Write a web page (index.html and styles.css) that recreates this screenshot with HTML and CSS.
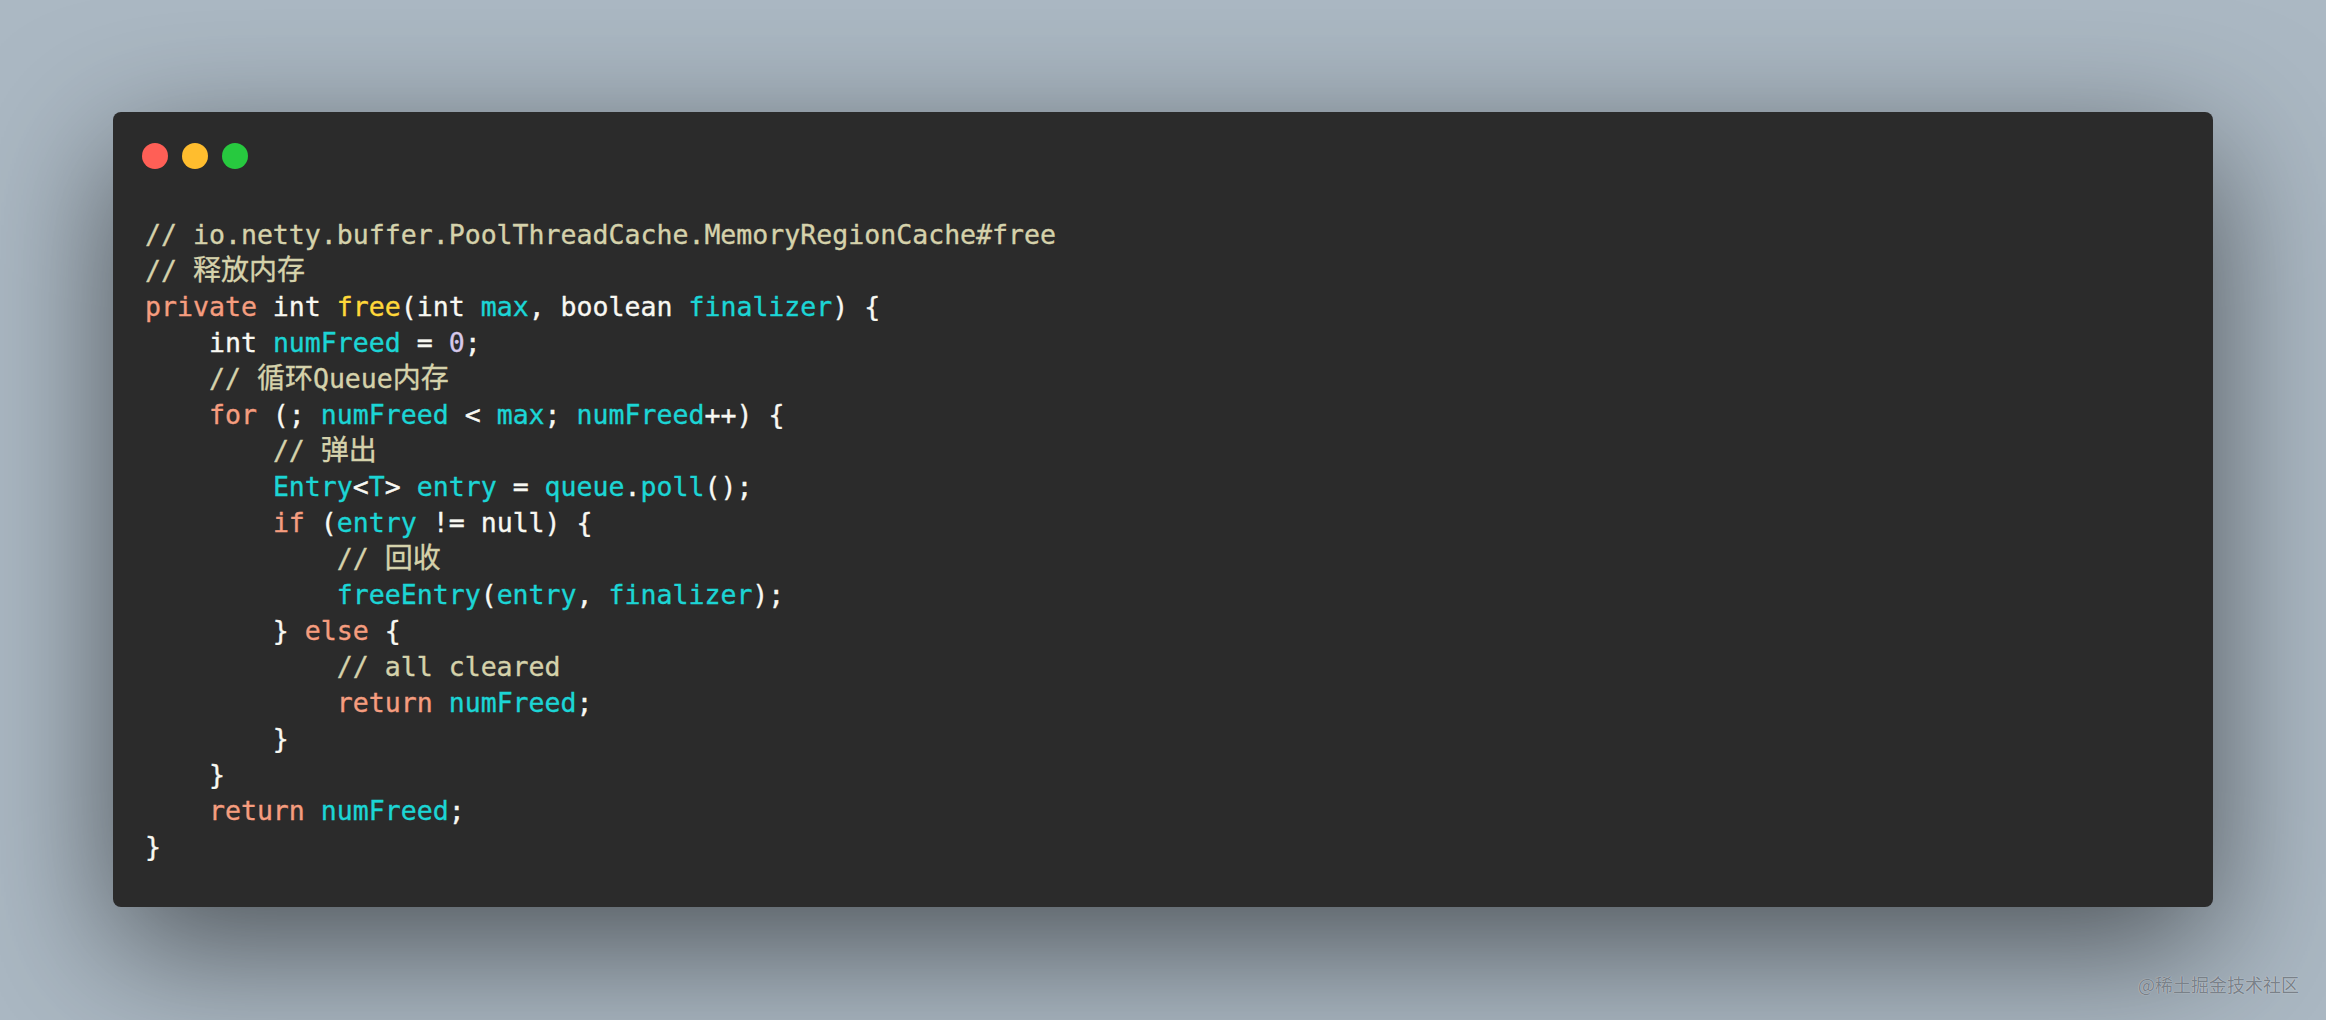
FILE: index.html
```html
<!DOCTYPE html>
<html lang="zh">
<head>
<meta charset="utf-8">
<title>PoolThreadCache free</title>
<link rel="stylesheet" href="styles.css">
</head>
<body>
<div class="stage">
  <div class="window">
    <div class="controls">
      <span class="dot red"></span>
      <span class="dot yellow"></span>
      <span class="dot green"></span>
    </div>
<pre class="code"><span class="c">// io.netty.buffer.PoolThreadCache.MemoryRegionCache#free</span>
<span class="c">// <span class="zh">释放内存</span></span>
<span class="k">private</span> int <span class="f">free</span>(int <span class="v">max</span>, boolean <span class="v">finalizer</span>) {
    int <span class="v">numFreed</span> = <span class="n">0</span>;
    <span class="c">// <span class="zh">循环</span>Queue<span class="zh">内存</span></span>
    <span class="k">for</span> (; <span class="v">numFreed</span> &lt; <span class="v">max</span>; <span class="v">numFreed</span>++) {
        <span class="c">// <span class="zh">弹出</span></span>
        <span class="v">Entry</span>&lt;<span class="v">T</span>&gt; <span class="v">entry</span> = <span class="v">queue</span>.<span class="v">poll</span>();
        <span class="k">if</span> (<span class="v">entry</span> != null) {
            <span class="c">// <span class="zh">回收</span></span>
            <span class="v">freeEntry</span>(<span class="v">entry</span>, <span class="v">finalizer</span>);
        } <span class="k">else</span> {
            <span class="c">// all cleared</span>
            <span class="k">return</span> <span class="v">numFreed</span>;
        }
    }
    <span class="k">return</span> <span class="v">numFreed</span>;
}</pre>
  </div>
  <div class="watermark">@稀土掘金技术社区</div>
</div>
</body>
</html>
```

FILE: styles.css
```css
html, body {
  margin: 0;
  padding: 0;
  height: 100%;
}

body {
  background: #abb8c3;
  overflow: hidden;
}

.stage {
  position: relative;
  box-sizing: border-box;
  width: 2326px;
  height: 1020px;
  padding: 112px 113px 113px 113px;
}

.window {
  box-sizing: border-box;
  height: 795px;
  background: #2b2b2b;
  border-radius: 8px;
  padding: 31px 29px 39px 29px;
  box-shadow: 0 40px 136px rgba(0, 0, 0, 0.55);
}

.controls {
  display: flex;
  gap: 14px;
  height: 26px;
  margin-bottom: 48px;
}

.dot {
  width: 26px;
  height: 26px;
  border-radius: 50%;
}

.red { background: #ff5f56; }
.yellow { background: #ffbd2e; }
.green { background: #27c93f; }

.code {
  margin: 0 0 0 3px;
  font-family: "DejaVu Sans Mono", "Noto Sans CJK SC", monospace;
  font-size: 26.55px;
  line-height: 36px;
  color: #f8f8f2;
  white-space: pre;
  -webkit-text-stroke: 0.35px;
}

.zh {
  font-family: "Noto Sans CJK SC", sans-serif;
  font-size: 28px;
  line-height: 1;
}

.c { color: #d5d2ab; }
.k { color: #f59d7f; }
.f { color: #ffd83a; }
.v { color: #1cd5d5; }
.n { color: #d6c8ea; }

.watermark {
  position: absolute;
  right: 27px;
  bottom: 24px;
  font-family: "Noto Sans CJK SC", sans-serif;
  font-size: 18px;
  line-height: 24px;
  color: rgba(108, 116, 124, 0.9);
  text-shadow: 0 0 1px rgba(255, 255, 255, 0.75);
}
```
